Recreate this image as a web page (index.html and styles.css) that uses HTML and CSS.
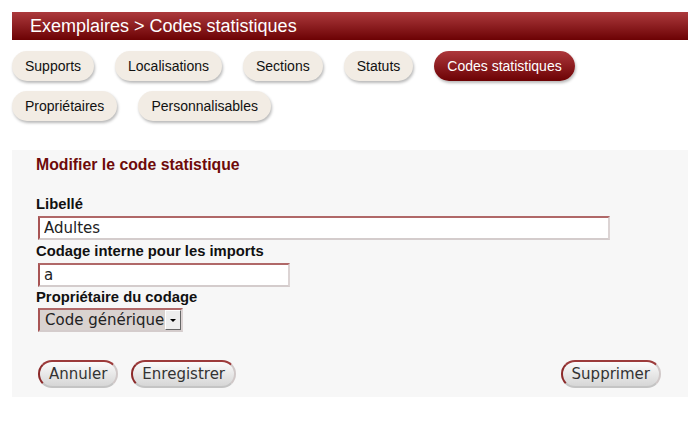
FILE: index.html
```html
<!DOCTYPE html>
<html lang="fr">
<head>
<meta charset="utf-8">
<title>Codes statistiques</title>
<link rel="stylesheet" href="styles.css">
</head>
<body>
<div class="page">
  <h1 class="header">Exemplaires &gt; Codes statistiques</h1>
  <nav class="tabs">
    <span class="tab">Supports</span>
    <span class="tab">Localisations</span>
    <span class="tab">Sections</span>
    <span class="tab">Statuts</span>
    <span class="tab active">Codes statistiques</span>
    <span class="tab">Propriétaires</span>
    <span class="tab">Personnalisables</span>
  </nav>
  <form class="panel">
    <h2 class="title">Modifier le code statistique</h2>
    <div class="fields">
      <label class="label">Libellé</label>
      <input class="input wide" type="text" value="Adultes">
      <label class="label">Codage interne pour les imports</label>
      <input class="input short" type="text" value="a">
      <label class="label l3">Propriétaire du codage</label>
      <div class="select"><span class="select-text">Code générique</span><span class="select-arrow"></span></div>
    </div>
    <div class="actions">
      <div class="left">
        <span class="btn">Annuler</span>
        <span class="btn">Enregistrer</span>
      </div>
      <span class="btn">Supprimer</span>
    </div>
  </form>
</div>
</body>
</html>
```

FILE: styles.css
```css
html, body { margin: 0; padding: 0; background: #fff; }
.page { padding: 12px 12px 0 12px; font-family: "Liberation Sans", Arial, sans-serif; }
.header {
  margin: 0;
  height: 28px;
  line-height: 28px;
  padding-left: 18px;
  font-size: 18px;
  font-weight: normal;
  color: #fff;
  background: linear-gradient(#ac3a3d, #6c0204);
}
.tabs {
  display: flex;
  flex-wrap: wrap;
  column-gap: 21px;
  row-gap: 10px;
  margin-top: 11px;
  width: 600px;
}
.tab {
  display: block;
  height: 30px;
  line-height: 30px;
  padding: 0 13px;
  font-size: 14px;
  color: #111;
  background: #f2ece4;
  border-radius: 15px;
  box-shadow: 1px 2px 3px rgba(0,0,0,0.28);
}
.tab.active {
  color: #fff;
  background: linear-gradient(#ad383c, #6c0204);
}
.panel {
  margin-top: 29px;
  background: #f7f7f7;
  padding: 5px 27px 9px 24px;
  display: block;
}
.title {
  margin: 0;
  font-size: 15.8px;
  line-height: 20px;
  font-weight: bold;
  color: #6e0a0a;
}
.fields { display: flex; flex-direction: column; align-items: flex-start; margin-top: 18px; }
.label {
  display: block;
  font-size: 14.8px;
  font-weight: bold;
  line-height: 23px;
  color: #111;
}
.label.l3 { line-height: 21px; }
.input {
  box-sizing: border-box;
  margin: 0 0 0 2px;
  height: 24px;
  padding: 0 4px;
  font-family: "DejaVu Sans", Verdana, sans-serif;
  font-size: 15px;
  color: #222;
  background: #fff;
  border-style: solid;
  border-width: 2px;
  border-color: #b06868 #dcd4d4 #d4cccc #a85454;
  outline: none;
}
.input.wide { width: 572px; }
.input.short { width: 252px; }
.select {
  box-sizing: border-box;
  margin-left: 2px;
  width: 145px;
  height: 24px;
  display: flex;
  align-items: center;
  background: #d9d3d0;
  border-style: solid;
  border-width: 2px;
  border-color: #b06868 #dcd4d4 #d4cccc #a85454;
  font-family: "DejaVu Sans", Verdana, sans-serif;
  font-size: 15px;
  color: #222;
}
.select-text { flex: 1; padding-left: 5px; white-space: nowrap; overflow: hidden; }
.select-arrow {
  width: 16px;
  height: 20px;
  box-sizing: border-box;
  background: #eeeeee;
  border: 1px solid #888;
  border-color: #fff #666 #666 #fff;
  display: flex;
  align-items: center;
  justify-content: center;
}
.select-arrow::after {
  content: "";
  border-left: 3px solid transparent;
  border-right: 3px solid transparent;
  border-top: 3px solid #000;
}
.actions {
  display: flex;
  justify-content: space-between;
  align-items: center;
  margin-top: 28px;
  padding-left: 2px;
}
.left { display: flex; gap: 13px; }
.btn {
  display: block;
  box-sizing: border-box;
  height: 28px;
  line-height: 24px;
  padding: 0 9px;
  font-family: "DejaVu Sans", Verdana, sans-serif;
  font-size: 15px;
  color: #333;
  background: linear-gradient(#fbfbfb, #d6d6d6);
  border-style: solid;
  border-width: 2px;
  border-color: #9c3a3a #d0c8c8 #c4c4c4 #8c2a2a;
  border-radius: 14px;
}
```
